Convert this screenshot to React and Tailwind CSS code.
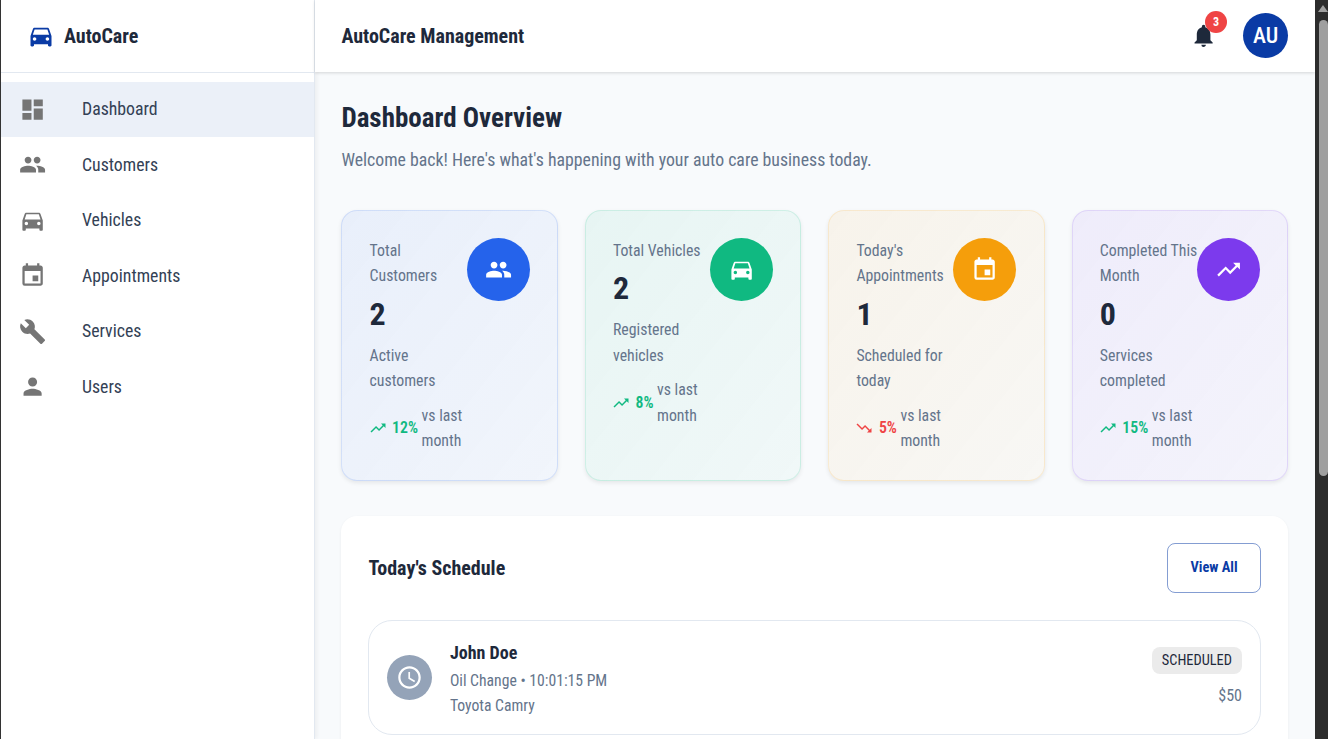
import { MdDashboard, MdPeople, MdDirectionsCar, MdEvent, MdBuild, MdPerson, MdNotifications, MdTrendingUp, MdTrendingDown, MdOutlineAccessTime } from 'react-icons/md';

const navItems = [
  { label: 'Dashboard', icon: MdDashboard, active: true },
  { label: 'Customers', icon: MdPeople },
  { label: 'Vehicles', icon: MdDirectionsCar },
  { label: 'Appointments', icon: MdEvent },
  { label: 'Services', icon: MdBuild },
  { label: 'Users', icon: MdPerson },
];

const stats = [
  {
    title: 'Total Customers', value: '2', desc: 'Active customers', trend: '12%', up: true, icon: MdPeople,
    card: 'from-[#2563eb12] to-[#2563eb08] border-[#2563eb26]', circle: 'bg-[#2563eb]',
  },
  {
    title: 'Total Vehicles', value: '2', desc: 'Registered vehicles', trend: '8%', up: true, icon: MdDirectionsCar,
    card: 'from-[#10b98112] to-[#10b98108] border-[#10b98126]', circle: 'bg-[#10b981]',
  },
  {
    title: "Today's Appointments", value: '1', desc: 'Scheduled for today', trend: '5%', up: false, icon: MdEvent,
    card: 'from-[#f59e0b12] to-[#f59e0b08] border-[#f59e0b26]', circle: 'bg-[#f59e0b]',
  },
  {
    title: 'Completed This Month', value: '0', desc: 'Services completed', trend: '15%', up: true, icon: MdTrendingUp,
    card: 'from-[#7c3aed12] to-[#7c3aed08] border-[#7c3aed26]', circle: 'bg-[#7c3aed]',
  },
];

function StatCard({ stat }) {
  const Icon = stat.icon;
  const Trend = stat.up ? MdTrendingUp : MdTrendingDown;
  return (
    <div className={`rounded-2xl border bg-gradient-to-br p-[27.2px] shadow-[0_2px_4px_rgba(0,0,0,0.08)] ${stat.card}`}>
      <div className="flex items-start justify-between">
        <div className="-mr-[2px] min-w-0 flex-1">
          <p className="text-[15.8px] leading-[25.2px] text-[#64748b]">{stat.title}</p>
          <p className="mt-[6px] text-[32px] leading-[38px] font-bold text-[#1e293b]">{stat.value}</p>
          <p className="mt-[10px] text-[15.8px] leading-[25.2px] text-[#64748b]">{stat.desc}</p>
          <div className="mt-[9.5px] flex items-center gap-[3.5px]">
            <Trend className={`mr-[2px] -ml-px size-[18px] shrink-0 ${stat.up ? 'text-[#10b981]' : 'text-[#ef4444]'}`} />
            <span className={`text-[15.8px] font-semibold ${stat.up ? 'text-[#10b981]' : 'text-[#ef4444]'}`}>{stat.trend}</span>
            <span className="w-12 text-[15.8px] leading-[25.2px] text-[#64748b]">vs last month</span>
          </div>
        </div>
        <div className={`flex size-[63px] shrink-0 items-center justify-center rounded-full text-white ${stat.circle}`}>
          <Icon className="size-[27.2px]" />
        </div>
      </div>
    </div>
  );
}

export default function App() {
  return (
    <div className="flex h-screen overflow-hidden border-l border-[#333333] bg-[#f8fafc] font-['Roboto',sans-serif] font-stretch-[87.5%]">
      {/* Sidebar */}
      <aside className="w-[314px] shrink-0 border-r border-[#e2e8f0] bg-white shadow-[2px_0_4px_rgba(0,0,0,0.05)]">
        <div className="flex h-[73px] items-center gap-[9px] border-b border-[#e2e8f0] pl-[26px]">
          <MdDirectionsCar className="size-7 text-[#0a3ba5]" />
          <span className="text-xl font-bold text-[#1e293b]">AutoCare</span>
        </div>
        <nav className="pt-[8.6px]">
          {navItems.map((item) => {
            const Icon = item.icon;
            return (
              <div key={item.label} className={`flex h-[55.5px] items-center gap-[35.8px] pl-[18px] ${item.active ? 'bg-[#ebf0f8]' : ''}`}>
                <Icon className="size-[27.2px] text-[#757575]" />
                <span className="text-[17.8px] text-[#334155]">{item.label}</span>
              </div>
            );
          })}
        </nav>
      </aside>

      {/* Main area */}
      <div className="flex min-w-0 flex-1 flex-col">
        <header className="flex h-[72px] shrink-0 items-center justify-between bg-white pr-[27px] pl-[26.4px] shadow-[0_1px_3px_rgba(0,0,0,0.15)]">
          <h1 className="text-xl font-bold text-[#1e293b]">AutoCare Management</h1>
          <div className="mb-px flex items-center gap-[26px]">
            <div className="relative">
              <MdNotifications className="size-[27.2px] text-[#1e293b]" />
              <span className="absolute -top-[11px] -right-[10px] flex size-[22px] items-center justify-center rounded-full bg-[#ef4444] text-xs font-bold text-white">3</span>
            </div>
            <div className="flex size-[45px] items-center justify-center rounded-full bg-[#0a3ba5] text-[22px] font-medium text-white">AU</div>
          </div>
        </header>

        <main className="min-h-0 flex-1 overflow-hidden pt-[28px] pr-[27px] pl-[26.4px]">
          <h2 className="text-[27px] leading-9 font-bold text-[#1e293b]">Dashboard Overview</h2>
          <p className="mt-[12px] text-[17.8px] leading-6 text-[#64748b]">Welcome back! Here's what's happening with your auto care business today.</p>

          <div className="mt-[38px] grid grid-cols-4 gap-[27px]">
            {stats.map((stat) => (
              <StatCard key={stat.title} stat={stat} />
            ))}
          </div>

          <section className="mt-[35px] rounded-2xl bg-white p-[27px] shadow-[0_1px_3px_rgba(0,0,0,0.06)]">
            <div className="flex items-center justify-between">
              <h3 className="text-xl font-bold text-[#1e293b]">Today's Schedule</h3>
              <button className="flex h-[50px] w-[94px] items-center justify-center rounded-lg border border-[#0a3ba580] text-[14.4px] font-bold text-[#0a3ba5]">View All</button>
            </div>
            <div className="mt-[27px] flex h-[115px] items-center gap-[17.5px] rounded-3xl border border-[#e2e8f0] px-[18px]">
              <div className="flex size-[45px] shrink-0 items-center justify-center rounded-full bg-[#94a3b8] text-white">
                <MdOutlineAccessTime className="size-[27px]" />
              </div>
              <div className="flex-1 pt-[2px]">
                <p className="text-lg leading-[28px] font-bold text-[#1e293b]">John Doe</p>
                <p className="mt-px text-[15.7px] leading-[25.2px] text-[#64748b]">Oil Change • 10:01:15 PM</p>
                <p className="text-[15.7px] leading-[25.2px] text-[#64748b]">Toyota Camry</p>
              </div>
              <div className="flex flex-col items-end gap-[10px]">
                <span className="flex h-[27px] items-center rounded-lg bg-[#ebebeb] px-[10px] text-[14.4px] text-[#1e293b]">SCHEDULED</span>
                <span className="text-base text-[#64748b]">$50</span>
              </div>
            </div>
          </section>
        </main>
      </div>

      {/* Browser scrollbar */}
      <div className="flex w-[13px] shrink-0 flex-col items-end bg-[#2c2c2c]">
        <div className="mt-[5px] size-0 border-x-[5px] border-b-[7px] border-x-transparent border-b-[#9f9f9f]" />
        <div className="mt-[8px] h-[456px] w-[9px] rounded-[5px] bg-[#9f9f9f]" />
      </div>
    </div>
  );
}
